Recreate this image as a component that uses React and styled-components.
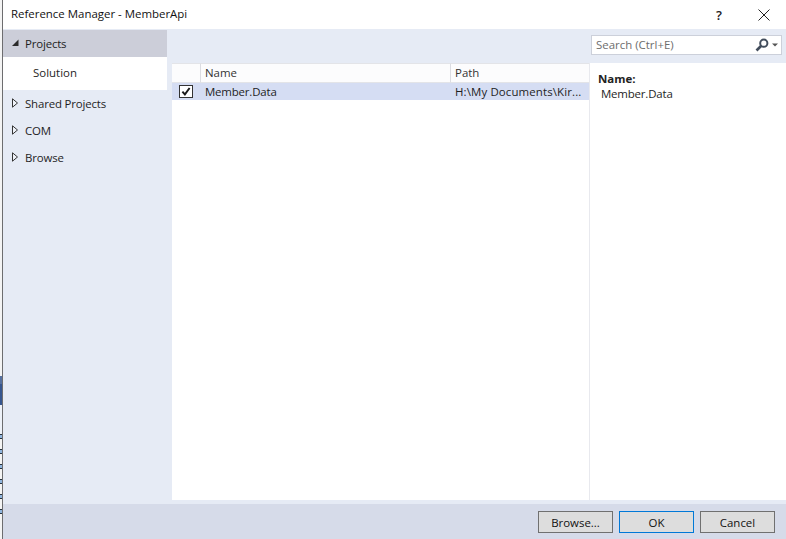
import React from 'react';
import styled, { createGlobalStyle } from 'styled-components';

const Global = createGlobalStyle`
    html, body, #root {
        margin: 0;
        padding: 0;
        width: 786px;
        height: 539px;
        overflow: hidden;
    }
    body {
        font-family: "Open Sans", "Noto Sans", sans-serif;
        font-size: 11.45px;
        color: #1e1e1e;
        background: #fff;
    }
`;

const Screen = styled.div`
    display: flex;
    width: 786px;
    height: 539px;
`;

const DesktopEdge = styled.div`
    width: 2px;
    flex: none;
    display: flex;
    flex-direction: column;
    background: #f4f4f4;
`;

const EdgeBlock = styled.div`
    height: ${({ $h }) => $h}px;
    background: ${({ $color }) => $color};
`;

const EdgeTick = styled.div`
    height: 3px;
    margin-bottom: 10px;
    background: #8fb4dc;
    border-top: 1px solid #26303c;
    border-bottom: 1px solid #26303c;
`;

const Dialog = styled.div`
    flex: 1;
    display: flex;
    flex-direction: column;
    border-left: 1px solid #6d6d6f;
    min-width: 0;
`;

const TitleBar = styled.div`
    height: 29px;
    flex: none;
    display: flex;
    align-items: center;
    padding-left: 8px;
    background: #fff;
    color: #111;
`;

const Title = styled.div`
    flex: 1;
    padding-bottom: 2px;
`;

const HelpButton = styled.div`
    width: 46px;
    height: 29px;
    display: flex;
    align-items: center;
    justify-content: center;
    padding-left: 4px;
    box-sizing: border-box;
    font-size: 13px;
    font-weight: 600;
    color: #222;
`;

const CloseButton = styled.div`
    width: 46px;
    height: 29px;
    display: flex;
    align-items: center;
    justify-content: center;
    padding-left: 2px;
    box-sizing: border-box;
`;

const Body = styled.div`
    flex: 1;
    display: flex;
    min-height: 0;
    background: #e6ebf5;
    padding-top: 1px;
`;

const Sidebar = styled.div`
    width: 164px;
    flex: none;
    margin-right: 5px;
`;

const TreeRow = styled.div`
    height: 27px;
    box-sizing: border-box;
    display: flex;
    align-items: center;
    gap: 5px;
    padding: 0 0 1px 8px;
    letter-spacing: -0.17px;
    background: ${({ $active }) => ($active ? '#ccced9' : 'transparent')};
    color: #1e1e1e;
`;

const TreeChild = styled.div`
    height: 33px;
    box-sizing: border-box;
    display: flex;
    align-items: center;
    padding: 0 0 2px 30px;
    background: #fff;
    color: #1e1e1e;
`;

const Main = styled.div`
    flex: 1;
    display: flex;
    flex-direction: column;
    min-width: 0;
    padding-bottom: 4px;
`;

const SearchStrip = styled.div`
    height: 33px;
    box-sizing: border-box;
    flex: none;
    display: flex;
    justify-content: flex-end;
    padding: 5px 4px 0 0;
`;

const SearchBox = styled.div`
    width: 191px;
    height: 20px;
    box-sizing: border-box;
    display: flex;
    align-items: center;
    justify-content: space-between;
    padding: 0 3px 1px 4px;
    background: #fff;
    border: 1px solid #ccd0da;
    color: #6d6d6d;
`;

const SearchIcons = styled.div`
    display: flex;
    align-items: center;
    gap: 3px;
`;

const Content = styled.div`
    flex: 1;
    display: flex;
    min-height: 0;
    background: #fff;
`;

const TableArea = styled.div`
    width: 418px;
    box-sizing: border-box;
    flex: none;
    border-right: 1px solid #e8e9ee;
`;

const Row = styled.div`
    display: grid;
    grid-template-columns: 28px 250px 1fr;
    height: ${({ $header }) => ($header ? 20 : 17)}px;
    background: ${({ $selected }) => ($selected ? '#d5ddf3' : '#fff')};
`;

const HeaderCell = styled.div`
    display: flex;
    align-items: center;
    padding: 0 0 1px 4px;
    border-left: ${({ $first }) => ($first ? 'none' : '1px solid #dcdde2')};
    background: #fcfcfd;
    border-top: 1px solid #e3e4e8;
    border-bottom: 1px solid #e3e4e8;
    color: #333;
    min-width: 0;
`;

const Cell = styled.div`
    display: flex;
    align-items: center;
    padding-left: 5px;
    overflow: hidden;
    white-space: nowrap;
    letter-spacing: ${({ $spacing }) => $spacing || 0}px;
    color: #1e1e1e;
`;

const CheckCell = styled.div`
    display: flex;
    align-items: center;
    justify-content: center;
`;

const CheckBox = styled.div`
    width: 12px;
    height: 11px;
    display: flex;
    align-items: center;
    justify-content: center;
    background: #fff;
    border: 1px solid #333;
`;

const Details = styled.div`
    flex: 1;
    padding: 8px 0 0 8px;
`;

const DetailLabel = styled.div`
    font-weight: 700;
    line-height: 15px;
    color: #222;
`;

const DetailValue = styled.div`
    line-height: 16px;
    padding-left: 3px;
    letter-spacing: -0.17px;
`;

const Footer = styled.div`
    height: 35px;
    flex: none;
    display: flex;
    justify-content: flex-end;
    gap: 6px;
    padding: 7px 11px 0 0;
    box-sizing: border-box;
    background: #d6dbe9;
`;

const Button = styled.button`
    width: 75px;
    height: 22px;
    padding: 0;
    font: inherit;
    color: #111;
    background: #dddddd;
    border: 1px solid ${({ $primary }) => ($primary ? '#0078d7' : '#707070')};
`;

const Collapsed = () => (
    <svg width="9" height="10" viewBox="0 0 9 10">
        <path d="M1.5 0.8 L6.5 5 L1.5 9.2 Z" fill="#f0f3f9" stroke="#333" />
    </svg>
);

const Expanded = () => (
    <svg width="9" height="10" viewBox="0 0 9 10">
        <path d="M7.5 1.5 L7.5 8 L1 8 Z" fill="#2a2a2a" />
    </svg>
);

const Magnifier = () => (
    <svg width="14" height="14" viewBox="0 0 14 14">
        <circle cx="8.8" cy="5.2" r="3.6" fill="none" stroke="#424d5c" strokeWidth="2" />
        <path d="M6 8 L1.5 12.5" stroke="#424d5c" strokeWidth="2.6" />
    </svg>
);

const Caret = () => (
    <svg width="6" height="4" viewBox="0 0 6 4">
        <path d="M0 0.5 H6 L3 3.5 Z" fill="#555" />
    </svg>
);

const Tick = () => (
    <svg width="10" height="9" viewBox="0 0 10 9">
        <path d="M1.4 4.6 L3.9 7.4 L8.6 1" fill="none" stroke="#1a1a1a" strokeWidth="1.9" />
    </svg>
);

const Close = () => (
    <svg width="12" height="12" viewBox="0 0 12 12">
        <path d="M0.5 0.5 L11.5 11.5 M11.5 0.5 L0.5 11.5" stroke="#222" strokeWidth="1" />
    </svg>
);

const edgeTicks = [0, 1, 2, 3, 4, 5];

const App = () => (
    <Screen>
        <Global />
        <DesktopEdge>
            <EdgeBlock $h={376} $color="#f4f4f4" />
            <EdgeBlock $h={8} $color="#56709f" />
            <EdgeBlock $h={21} $color="#36568f" />
            <EdgeBlock $h={29} $color="#eef2f9" />
            {edgeTicks.map((tick) => (
                <EdgeTick key={tick} />
            ))}
        </DesktopEdge>
        <Dialog>
            <TitleBar>
                <Title>Reference Manager - MemberApi</Title>
                <HelpButton>?</HelpButton>
                <CloseButton><Close /></CloseButton>
            </TitleBar>
            <Body>
                <Sidebar>
                    <TreeRow $active><Expanded />Projects</TreeRow>
                    <TreeChild>Solution</TreeChild>
                    <TreeRow><Collapsed />Shared Projects</TreeRow>
                    <TreeRow><Collapsed />COM</TreeRow>
                    <TreeRow><Collapsed />Browse</TreeRow>
                </Sidebar>
                <Main>
                    <SearchStrip>
                        <SearchBox>
                            Search (Ctrl+E)
                            <SearchIcons><Magnifier /><Caret /></SearchIcons>
                        </SearchBox>
                    </SearchStrip>
                    <Content>
                        <TableArea>
                            <Row $header>
                                <HeaderCell $first />
                                <HeaderCell>Name</HeaderCell>
                                <HeaderCell>Path</HeaderCell>
                            </Row>
                            <Row $selected>
                                <CheckCell><CheckBox><Tick /></CheckBox></CheckCell>
                                <Cell $spacing={-0.17}>Member.Data</Cell>
                                <Cell $spacing={0.13}>H:\My Documents\Kir...</Cell>
                            </Row>
                        </TableArea>
                        <Details>
                            <DetailLabel>Name:</DetailLabel>
                            <DetailValue>Member.Data</DetailValue>
                        </Details>
                    </Content>
                </Main>
            </Body>
            <Footer>
                <Button>Browse...</Button>
                <Button $primary>OK</Button>
                <Button>Cancel</Button>
            </Footer>
        </Dialog>
    </Screen>
);

export default App;
